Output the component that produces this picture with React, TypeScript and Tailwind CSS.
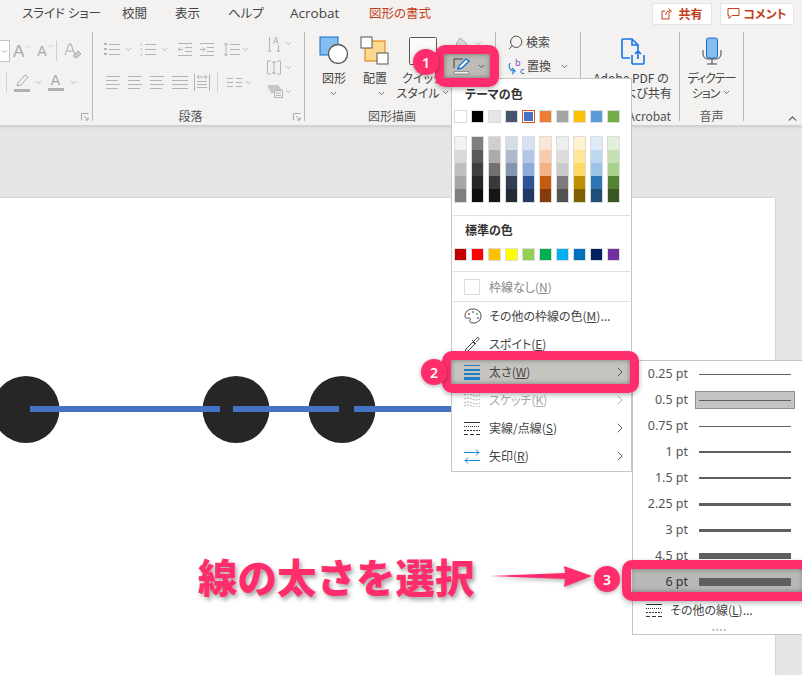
import { ChevronDown, ChevronRight, ChevronUp, Search } from "lucide-react";
import type { ReactNode } from "react";

const jp = "font-['Noto_Sans_CJK_JP','Noto_Sans',sans-serif]";

const themeColors = [
  "bg-[#ffffff]", "bg-[#000000]", "bg-[#e7e6e6]", "bg-[#44546a]", "bg-[#4472c4]",
  "bg-[#ed7d31]", "bg-[#a5a5a5]", "bg-[#ffc000]", "bg-[#5b9bd5]", "bg-[#70ad47]",
];

const standardColors = [
  "bg-[#c00000]", "bg-[#ff0000]", "bg-[#ffc000]", "bg-[#ffff00]", "bg-[#92d050]",
  "bg-[#00b050]", "bg-[#00b0f0]", "bg-[#0070c0]", "bg-[#002060]", "bg-[#7030a0]",
];

const shades = [
  ["bg-[#f2f2f2]", "bg-[#d9d9d9]", "bg-[#bfbfbf]", "bg-[#a6a6a6]", "bg-[#7f7f7f]"],
  ["bg-[#7f7f7f]", "bg-[#595959]", "bg-[#3f3f3f]", "bg-[#262626]", "bg-[#0d0d0d]"],
  ["bg-[#d0cece]", "bg-[#aeabab]", "bg-[#757070]", "bg-[#3a3838]", "bg-[#171616]"],
  ["bg-[#d6dce5]", "bg-[#adb9ca]", "bg-[#8497b0]", "bg-[#333f50]", "bg-[#222a35]"],
  ["bg-[#d9e2f3]", "bg-[#b4c7e7]", "bg-[#8faadc]", "bg-[#2f5597]", "bg-[#1f3864]"],
  ["bg-[#fbe5d6]", "bg-[#f8cbad]", "bg-[#f4b183]", "bg-[#c55a11]", "bg-[#843c0c]"],
  ["bg-[#ededed]", "bg-[#dbdbdb]", "bg-[#c9c9c9]", "bg-[#7b7b7b]", "bg-[#525252]"],
  ["bg-[#fff2cc]", "bg-[#ffe699]", "bg-[#ffd966]", "bg-[#bf9000]", "bg-[#7f6000]"],
  ["bg-[#deebf7]", "bg-[#bdd7ee]", "bg-[#9dc3e6]", "bg-[#2e75b6]", "bg-[#1f4e79]"],
  ["bg-[#e2f0d9]", "bg-[#c5e0b4]", "bg-[#a9d18e]", "bg-[#548235]", "bg-[#385723]"],
];

const weights = [
  { label: "0.25 pt", line: "h-px" },
  { label: "0.5 pt", line: "h-px", selected: true },
  { label: "0.75 pt", line: "h-px" },
  { label: "1 pt", line: "h-[2px]" },
  { label: "1.5 pt", line: "h-[2px]" },
  { label: "2.25 pt", line: "h-[3px]" },
  { label: "3 pt", line: "h-[3px]" },
  { label: "4.5 pt", line: "h-[6px]" },
  { label: "6 pt", line: "h-[8px]" },
];

const Caret = ({ className = "" }: { className?: string }) => (
  <ChevronDown className={`h-[9px] w-[9px] ${className}`} strokeWidth={2} />
);

const Launcher = () => (
  <svg className="absolute right-[3px] top-[81px] h-[8px] w-[8px]" viewBox="0 0 8 8" fill="none" stroke="#a8a8a8">
    <path d="M.5 7.5v-7h7M3 3l4 4M7 4v3H4" />
  </svg>
);

// stacked gray strokes for the disabled paragraph buttons
const Lines = ({ w = 14, gap = 4, n = 4, left = 0 }: { w?: number; gap?: number; n?: number; left?: number }) => (
  <svg width={w + left} height={gap * (n - 1) + 1} stroke="#b4b4b4">
    {Array.from({ length: n }, (_, i) => (
      <path key={i} d={`M${left} ${i * gap + 0.5}h${i % 2 && w < 16 ? w - 2 : w}`} />
    ))}
  </svg>
);

// "太さ(W)" -> the letter in brackets gets its access-key underline
const Mnemonic = ({ label }: { label: string }) => {
  const [before, key, after] = label.split(/\(|\)/);
  return <>{before}(<span className="underline">{key}</span>){after}</>;
};

const Group = ({ w, label, launcher, labelPad = "", children }: { w: string; label?: string; launcher?: boolean; labelPad?: string; children: ReactNode }) => (
  <div className={`relative flex h-[89px] shrink-0 flex-col border-r border-[#b9b9b9] ${w}`}>
    <div className="min-h-0 flex-1">{children}</div>
    <div className={`-mb-[4px] h-[18px] text-center text-[12px] leading-[18px] text-[#555] ${labelPad}`}>{label}</div>
    {launcher && <Launcher />}
  </div>
);

const FontGroup = () => (
  <Group w="w-[93px]" launcher>
    <div className="flex h-[30px] items-center pt-[8px] text-[#a8a8a8]">
      <div className="flex h-[22px] w-[10px] items-center border-y border-r border-[#c4c4c4] bg-white">
        <Caret />
      </div>
      <span className="ml-[3px] font-['Liberation_Sans'] text-[17px] leading-none">A</span>
      <ChevronUp className="h-[7px] w-[7px] -translate-y-[5px]" />
      <span className="ml-[6px] font-['Liberation_Sans'] text-[14px] leading-none">A</span>
      <ChevronDown className="h-[7px] w-[7px] -translate-y-[5px]" />
      <div className="ml-[2px] h-[20px] w-px bg-[#cfcfcf]" />
      <svg className="ml-[7px]" width="18" height="18" viewBox="0 0 18 18" fill="none" stroke="#a8a8a8">
        <path d="M1 13 5 2h2l4 11M3 9h6" />
        <path d="m9 14 5-5 3 3-5 4z" fill="#ccc" />
      </svg>
    </div>
    <div className="mt-[9px] flex h-[22px] items-center text-[#a8a8a8]">
      <div className="ml-[6px] h-[20px] w-px bg-[#cfcfcf]" />
      <svg className="ml-[7px]" width="17" height="20" viewBox="0 0 17 20" fill="none" stroke="#a8a8a8">
        <path d="m4 11 7-8 3 2-7 8-4 1z" />
        <path d="M0 17h16v3H0z" fill="#b0b0b0" stroke="none" />
      </svg>
      <Caret className="ml-[3px]" />
      <div className="ml-[4px] flex w-[17px] flex-col items-center">
        <span className="font-['Liberation_Sans'] text-[14px] leading-[15px] text-[#a8a8a8]">A</span>
        <div className="h-[3px] w-[16px] bg-[#b0b0b0]" />
      </div>
      <Caret className="ml-[5px]" />
    </div>
  </Group>
);

const ParagraphGroup = () => (
  <Group w="w-[212px]" label="段落" labelPad="pr-[16px]" launcher>
    <div className="flex text-[#a8a8a8]">
      <div className="w-[174px]">
        <div className="mt-[9px] flex h-[16px] items-center pl-[11px]">
          <svg width="16" height="15" fill="#b4b4b4" stroke="#b4b4b4">
            <path d="M0 1h3v2H0zM0 6h3v2H0zM0 11h3v2H0z" stroke="none" />
            <path d="M5 2.5h11M5 7.5h11M5 12.5h11" fill="none" />
          </svg>
          <Caret className="ml-[4px]" />
          <svg className="ml-[7px]" width="16" height="15" stroke="#b4b4b4" fill="none">
            <text x="0" y="4" fontSize="4" fill="#aaa" stroke="none">1</text>
            <text x="0" y="9" fontSize="4" fill="#aaa" stroke="none">2</text>
            <text x="0" y="14" fontSize="4" fill="#aaa" stroke="none">3</text>
            <path d="M5 2.5h11M5 7.5h11M5 12.5h11" />
          </svg>
          <Caret className="ml-[4px]" />
          <svg className="ml-[9px]" width="14" height="13" stroke="#b4b4b4" fill="none">
            <path d="M0 .5h14M7 4.5h7M7 8.5h7M0 12.5h14M5 6.5H0m2-2-2 2 2 2" />
          </svg>
          <svg className="ml-[8px]" width="14" height="13" stroke="#b4b4b4" fill="none">
            <path d="M0 .5h14M7 4.5h7M7 8.5h7M0 12.5h14M0 6.5h5m-2-2 2 2-2 2" />
          </svg>
          <svg className="ml-[9px]" width="17" height="15" stroke="#b4b4b4" fill="none">
            <path d="M3 1v13M1 3l2-2 2 2M1 12l2 2 2-2M7 2.5h10M7 7.5h10M7 12.5h10" />
          </svg>
          <Caret className="ml-[1px]" />
        </div>
        <div className="mt-[14px] flex h-[22px] items-center pl-[13px]">
          <Lines />
          <span className="ml-[8px]"><Lines /></span>
          <span className="ml-[8px]"><Lines /></span>
          <span className="ml-[8px]"><Lines w={16} /></span>
          <svg className="ml-[6px]" width="16" height="17" stroke="#b4b4b4" fill="none">
            <path d="M.5 0v17M15.5 0v17M3 7.500h10M3 10.500h10M3 13.500h10M3 3h10M5 1 3 3l2 2M11 1l2 2-2 2" />
          </svg>
          <div className="ml-[7px] h-[20px] w-px bg-[#cfcfcf]" />
          <svg className="ml-[9px]" width="15" height="9" stroke="#b4b4b4" fill="none">
            <path d="M0 .5h6M9 .5h6M0 4.500h6M9 4.500h6M0 8.500h6M9 8.500h6" />
          </svg>
          <Caret className="ml-[2px]" />
        </div>
      </div>
      <div className="flex flex-col">
        <div className="mt-[1px] flex h-[20px] items-center">
          <svg width="14" height="19" fill="none" stroke="#b4b4b4">
            <path d="M2.500 3v15M.5 16l2 2 2-2M11.500 11v7M9.500 16l2 2 2-2" />
            <text x="6" y="10" fontSize="9" fill="#aaa" stroke="none">A</text>
          </svg>
          <Caret className="ml-[3px]" />
        </div>
        <div className="mt-[4px] flex h-[20px] items-center">
          <svg width="14" height="15" fill="none" stroke="#b4b4b4">
            <path d="M4 1H.5v13H4M10 1h3.500v13H10M7 1v13M5 3l2-2 2 2M5 12l2 2 2-2" />
          </svg>
          <Caret className="ml-[3px]" />
        </div>
        <div className="mt-[4px] flex h-[20px] items-center">
          <svg width="16" height="14" fill="none" stroke="#b4b4b4">
            <path d="M0 1h11l4 5H8v3H4z" fill="#c8c8c8" stroke="none" />
            <path d="M7.500 6.500h8v7h-8zM9 9h5M9 11.500h5" fill="#f3f2f1" />
          </svg>
          <Caret className="ml-[1px]" />
        </div>
      </div>
    </div>
  </Group>
);

const BigButton = ({ w, icon, lines }: { w: string; icon: ReactNode; lines: ReactNode }) => (
  <div className={`flex shrink-0 flex-col items-center ${w}`}>
    <div className="flex h-[36px] items-center">{icon}</div>
    <div className="mt-[1px] text-center text-[12px] leading-[15px] text-[#444]">{lines}</div>
  </div>
);

const ShapeGroup = () => (
  <Group w="w-[191px]" label="図形描画" labelPad="pr-[16px]">
    <div className="flex pl-[11px] pt-[1px]">
      <BigButton
        w="w-[36px]"
        icon={
          <svg width="30" height="30" viewBox="0 0 30 30">
            <rect x="1" y="1" width="18" height="18" fill="#84bdee" stroke="#0f6fd0" />
            <circle cx="19" cy="18" r="9.500" fill="#fff" stroke="#555" strokeWidth="1.300" />
          </svg>
        }
        lines={<><div>図形</div><Caret className="mx-auto mt-[4px] text-[#444]" /></>}
      />
      <BigButton
        w="w-[40px]"
        icon={
          <svg className="ml-[6px]" width="30" height="30" viewBox="0 0 30 30">
            <rect x="5" y="5" width="20" height="20" fill="#fbd98e" stroke="#df7a00" />
            <rect x="1" y="1" width="11" height="11" fill="#fff" stroke="#555" />
            <rect x="17" y="17" width="11" height="11" fill="#fff" stroke="#555" />
          </svg>
        }
        lines={<><div className="ml-[6px]">配置</div><Caret className="ml-[20px] mt-[4px] text-[#444]" /></>}
      />
      <BigButton
        w="w-[62px]"
        icon={
          <svg className="ml-[3px]" width="34" height="30" viewBox="0 0 34 30" fill="none">
            <rect x="1.500" y="1.500" width="27" height="27" rx="1" fill="#fafafa" stroke="#555" />
            <path d="m26 20 7-9" stroke="#777" strokeWidth="2" />
          </svg>
        }
        lines={<><div>クイック</div><div className="flex items-center justify-center">スタイル<Caret className="ml-[1px]" /></div></>}
      />
      <div className="flex h-[20px] items-center pt-[1px]">
        <svg width="17" height="14" viewBox="0 0 17 14" fill="#bbb" stroke="#a8a8a8">
          <path d="m6 1 7 6-5 6-6-6z" fill="#d8d8d8" />
          <path d="M14 8c1 2 2 3 1 4s-2 0-1-4z" />
        </svg>
        <Caret className="ml-[3px] text-[#a8a8a8]" />
      </div>
    </div>
  </Group>
);

const EditGroup = () => (
  <Group w="w-[85px]">
    <div className="pl-[11px] text-[12px] leading-[16px] text-[#444]">
      <div className="flex h-[20px] items-center">
        <Search className="h-[17px] w-[17px] -scale-x-100 text-[#444]" strokeWidth={1.300} />
        <span className="ml-[2px]">検索</span>
      </div>
      <div className="mt-[4px] flex h-[20px] items-center">
        <svg width="19" height="20" viewBox="0 0 19 20" fill="none">
          <path d="M3 7c-2 4 0 8 4 8" stroke="#2b88d8" strokeWidth="1.300" />
          <path d="m5 12 3 3-3 3" stroke="#2b88d8" strokeWidth="1.300" />
          <text x="8" y="10" fontSize="9" fill="#8a4bb0">b</text>
          <text x="13" y="18" fontSize="9" fill="#2b6fb0">c</text>
        </svg>
        <span className="ml-[1px]">置換</span>
        <Caret className="ml-[9px]" />
      </div>
    </div>
  </Group>
);

const AdobeGroup = () => (
  <Group w="w-[99px]" label="Adobe Acrobat">
    <div className="flex flex-col items-center pl-[2px] pt-[1px]">
      <div className="flex h-[36px] items-center">
        <svg className="ml-[4px]" width="24" height="27" viewBox="0 0 24 27" fill="none" stroke="#1473e6" strokeWidth="1.600">
          <path d="M9 20H2a1 1 0 0 1-1-1V2a1 1 0 0 1 1-1h9l6 6v5M11 1v6h6" />
          <path d="M11 17v8a1 1 0 0 0 1 1h10a1 1 0 0 0 1-1v-8M17 21v-8m-3 3 3-3 3 3" />
        </svg>
      </div>
      <div className="mt-[1px] whitespace-nowrap text-center text-[12px] leading-[15px] text-[#444]">
        <div>Adobe PDF の</div>
        <div>作成および共有</div>
      </div>
    </div>
  </Group>
);

const VoiceGroup = () => (
  <Group w="w-[64px]" label="音声">
    <div className="flex flex-col items-center pt-[1px]">
      <div className="flex h-[36px] items-center">
        <svg width="20" height="28" viewBox="0 0 20 28" fill="none">
          <rect x="4.500" y="1" width="11" height="20" rx="2" fill="#84bdee" stroke="#0f6fd0" />
          <path d="M1 13v4a5 5 0 0 0 5 5h8a5 5 0 0 0 5-5v-4M10 22v5M5 27h10" stroke="#444" />
        </svg>
      </div>
      <div className="mt-[1px] whitespace-nowrap text-center text-[12px] leading-[15px] tracking-[-1px] text-[#444]">
        <div>ディクテー</div>
        <div className="flex items-center justify-center">ション<Caret className="ml-[3px]" /></div>
      </div>
    </div>
  </Group>
);

const Ribbon = () => (
  <div className="relative z-10 h-[98px] shrink-0 bg-[#f3f2f1] pt-[5px] shadow-[0_2px_3px_rgba(0,0,0,0.12)]">
    <div className="flex">
      <FontGroup />
      <ParagraphGroup />
      <ShapeGroup />
      <EditGroup />
      <AdobeGroup />
      <VoiceGroup />
      <div className="flex flex-1 items-end justify-end pb-[5px] pr-[3px]">
        <ChevronUp className="h-[13px] w-[13px] translate-y-[9px] text-[#555]" />
      </div>
    </div>
  </div>
);

const TabBar = () => (
  <div className="flex h-[27px] shrink-0 items-center bg-[#f3f2f1] text-[12.500px] text-[#444]">
    <span className="ml-[22px] w-[100px]">スライド ショー</span>
    <span className="w-[53px]">校閲</span>
    <span className="w-[53px]">表示</span>
    <span className="w-[62px]">ヘルプ</span>
    <span className="w-[79px] font-['Open_Sans','Noto_Sans'] text-[13.500px]">Acrobat</span>
    <span className="w-[283px] text-[#c43e1c]">図形の書式</span>
    <div className="flex h-[22px] w-[60px] items-center justify-center gap-[5px] rounded-[2px] border border-[#e4e2e0] bg-white text-[12px] font-bold text-[#c43e1c]">
      <svg width="12" height="13" viewBox="0 0 12 13" fill="none" stroke="#c43e1c">
        <path d="M8 6.500v5.500H1V4h3M5 8c0-3 1-4 4-4M7.500 1.500 10.500 4 7.500 6.500" />
      </svg>
      共有
    </div>
    <div className="ml-[8px] flex h-[22px] w-[74px] items-center justify-center gap-[3px] rounded-[2px] border border-[#e4e2e0] bg-white text-[12px] font-bold text-[#c43e1c]">
      <svg width="13" height="13" viewBox="0 0 13 13" fill="none" stroke="#c43e1c">
        <path d="M1 1.500h11v7H5l-3 3v-3H1z" />
      </svg>
      コメント
    </div>
  </div>
);

const Swatch = ({ color, active }: { color: string; active?: boolean }) => (
  <div className={`h-[13px] w-[13px] border ${active ? "border-[#e8501a] p-px" : "border-[#dcdcdc]"}`}>
    <div className={`h-full w-full ${color}`} />
  </div>
);

const MenuItem = ({ icon, label, hasArrow, muted, hot }: { icon: ReactNode; label: string; hasArrow?: boolean; muted?: boolean; hot?: boolean }) => (
  <div className={`flex h-[28px] items-center pl-[12px] text-[12px] ${hot ? "bg-[#c6c4bf]" : ""} ${muted ? "text-[#aaa]" : "text-[#444]"}`}>
    <div className="flex w-[25px] shrink-0 items-center">{icon}</div>
    <span className="flex-1 whitespace-nowrap"><Mnemonic label={label} /></span>
    {hasArrow && <ChevronRight className={`mr-[3px] h-[16px] w-[16px] ${muted ? "text-[#aaa]" : "text-[#444]"}`} strokeWidth={1.300} />}
  </div>
);

const NoLineItem = () => (
  <div className="flex h-[29px] items-center pl-[12px] text-[12px] text-[#888]">
    <div className="mr-[9px] h-[16px] w-[16px] border border-[#dcdcdc]" />
    <Mnemonic label="枠線なし(N)" />
  </div>
);

const ColorMenu = () => (
  <div className="absolute left-[451px] top-[78px] z-20 h-[394px] w-[181px] border border-[#c8c6c4] bg-white">
    <div className="h-[29px] pl-[13px] text-[12px] font-bold leading-[29px] text-[#333]">テーマの色</div>
    <div className="mt-[2px] flex gap-[4px] pl-[2px]">
      {themeColors.map((c, i) => <Swatch key={c} color={c} active={i === 4} />)}
    </div>
    <div className="mt-[13px] flex gap-[4px] pl-[2px]">
      {shades.map((col, i) => (
        <div key={i} className="w-[13px] border border-[#dcdcdc]">
          {col.map(c => <div key={c} className={`h-[13px] ${c}`} />)}
        </div>
      ))}
    </div>
    <div className="mx-px mt-[12px] h-px bg-[#e1dfdd]" />
    <div className="h-[30px] pl-[13px] text-[12px] font-bold leading-[28px] text-[#333]">標準の色</div>
    <div className="mt-[2px] flex gap-[4px] pl-[2px]">
      {standardColors.map(c => <Swatch key={c} color={c} />)}
    </div>
    <div className="mx-px mt-[10px] h-px bg-[#e1dfdd]" />
    <NoLineItem />
    <div className="mx-px h-px bg-[#e1dfdd]" />
    <MenuItem
      label="その他の枠線の色(M)..."
      icon={
        <svg width="18" height="16" viewBox="0 0 18 16" fill="none" stroke="#444">
          <path d="M9 1C4 1 1 4 1 8c0 3 3 2 4 2s2 1 1 2 0 3 3 3c5 0 8-3 8-7s-3-7-8-7z" />
          <circle cx="5" cy="6" r="1" fill="#c43e1c" stroke="none" />
          <circle cx="9" cy="4" r="1" fill="#2b88d8" stroke="none" />
          <circle cx="13" cy="6" r="1" fill="#70ad47" stroke="none" />
          <circle cx="14" cy="10" r="1" fill="#8a4bb0" stroke="none" />
        </svg>
      }
    />
    <MenuItem
      label="スポイト(E)"
      icon={
        <svg width="16" height="17" viewBox="0 0 16 17" fill="none" stroke="#444">
          <path d="m1 16 1-3 7-7 2 2-7 7zM8 4l4 4M10 5l3-3c1-1 2 0 2 1s-3 3-3 3" />
        </svg>
      }
    />
    <MenuItem
      hot
      hasArrow
      label="太さ(W)"
      icon={
        <svg width="16" height="15" fill="#1f80c8">
          <path d="M0 0h16v1H0zM0 4h16v2H0zM0 8h16v2H0zM0 12h16v3H0z" />
        </svg>
      }
    />
    <MenuItem
      muted
      hasArrow
      label="スケッチ(K)"
      icon={
        <svg width="16" height="13" fill="none" stroke="#aaa" strokeDasharray="2 1">
          <path d="M0 1q4-2 8 0t8 0M0 5q4-2 8 0t8 0M0 9q4-2 8 0t8 0M0 12q4-2 8 0t8 0" />
        </svg>
      }
    />
    <MenuItem
      hasArrow
      label="実線/点線(S)"
      icon={
        <svg width="16" height="13" fill="none" stroke="#333">
          <path d="M0 .5h16" />
          <path d="M0 4.500h16" strokeDasharray="1 1" />
          <path d="M0 8.500h16" strokeDasharray="2 1" />
          <path d="M0 12.500h16" strokeDasharray="4 2" />
        </svg>
      }
    />
    <MenuItem
      hasArrow
      label="矢印(R)"
      icon={
        <svg width="16" height="15" fill="none" stroke="#1f80c8">
          <path d="M0 3.500h15m-3-3 3 3-3 3M16 11.500H1m3-3-3 3 3 3" />
        </svg>
      }
    />
  </div>
);

const WeightMenu = () => (
  <div className="absolute left-[632px] top-[360px] z-20 h-[275px] w-[175px] border border-[#c8c6c4] bg-white">
    {weights.map(w => (
      <div key={w.label} className={`flex h-[26px] items-center font-['Noto_Sans'] text-[12.500px] ${w.label === "6 pt" ? "bg-[#b8b8b6] text-[#333]" : "text-[#555]"}`}>
        <span className="w-[55px] text-right">{w.label}</span>
        <div className={`ml-[7px] flex h-[18px] w-[100px] items-center border px-[3px] ${w.selected ? "border-[#8e8e8e] bg-[#c4c4c4]" : "border-transparent"}`}>
          <div className={`w-full bg-[#5f5f5f] ${w.line}`} />
        </div>
      </div>
    ))}
    <div className="flex h-[30px] items-center pl-[13px] text-[12px] text-[#444]">
      <svg className="mr-[8px]" width="16" height="13" fill="none" stroke="#333">
        <path d="M0 .5h16" />
        <path d="M0 4.500h16" strokeDasharray="1 1" />
        <path d="M0 8.500h16" strokeDasharray="2 1" />
        <path d="M0 12.500h16" strokeDasharray="4 2" />
      </svg>
      <Mnemonic label="その他の線(L)..." />
    </div>
    <div className="text-center text-[8px] leading-[8px] tracking-[1px] text-[#bbb]">••••</div>
  </div>
);

const Badge = ({ n, className }: { n: number; className: string }) => (
  <div className={`absolute z-40 flex h-[26px] w-[26px] items-center justify-center rounded-full bg-[#ff2d6c] font-['Noto_Sans'] text-[14px] font-semibold text-white shadow-[0_1px_4px_rgba(0,0,0,0.35)] ${className}`}>
    {n}
  </div>
);

const Frame = ({ className }: { className: string }) => (
  <div className={`absolute z-30 rounded-[10px] border-[9px] border-[#ff2d6c] shadow-[0_2px_5px_rgba(0,0,0,0.3),inset_0_0_5px_rgba(0,0,0,0.4)] ${className}`} />
);

const Slide = () => (
  <div className="relative h-[477px] w-[775px] bg-white shadow-[0_0_2px_rgba(0,0,0,0.2)]">
    {[26, 236, 342].map(x => (
      <div key={x} className="absolute top-[178px] h-[67px] w-[67px] -translate-x-1/2 rounded-full bg-[#262626]" style={{ left: x }} />
    ))}
    <div className="absolute left-[30px] top-[208px] h-[6px] w-[190px] bg-[#4472c4]" />
    <div className="absolute left-[233px] top-[208px] h-[6px] w-[106px] bg-[#4472c4]" />
    <div className="absolute left-[354px] top-[208px] h-[6px] w-[100px] bg-[#4472c4]" />
  </div>
);

const Callouts = () => (
  <>
    <Frame className="left-[435px] top-[45px] h-[42px] w-[64px]" />
    <Frame className="left-[442px] top-[351px] h-[42px] w-[197px]" />
    <Frame className="left-[622px] top-[560px] h-[41px] w-[190px]" />
    <Badge n={1} className="left-[413px] top-[49px]" />
    <Badge n={2} className="left-[421px] top-[359px]" />
    <Badge n={3} className="left-[594px] top-[566px]" />
    <div className="absolute left-[198px] top-[547px] z-30 whitespace-nowrap text-[39.500px] font-black leading-[58px] text-[#ff2d6c] [font-feature-settings:normal] [paint-order:stroke_fill] [-webkit-text-stroke:3px_white] [text-shadow:2px_3px_4px_rgba(0,0,0,0.35)]">
      線の太さを選択
    </div>
    <svg className="absolute left-[488px] top-[564px] z-30 drop-shadow-[1px_2px_2px_rgba(0,0,0,0.3)]" width="108" height="26" viewBox="0 0 108 26">
      <path d="M2 12 77 9l-1-7 28 10-28 11 1-8z" fill="#ff2d6c" />
    </svg>
  </>
);

const App = () => {
  return (
    <div className={`relative flex h-[675px] w-[802px] flex-col overflow-hidden bg-[#e6e6e6] [font-feature-settings:'palt'] ${jp}`}>
      <TabBar />
      <Ribbon />
      <div className="flex-1 pt-[73px]">
        <Slide />
      </div>
      <ColorMenu />
      <WeightMenu />
      {/* pen button sits on top of the ribbon, inside callout 1 */}
      <div className="absolute left-[444px] top-[54px] z-20 flex h-[24px] w-[46px] items-center bg-[#bdbbb5] pl-[9px]">
        <svg width="18" height="17" viewBox="0 0 18 17" fill="none">
          <path d="M1 1h9M1 1v9" stroke="#444" />
          <path d="m5 11 1-3 7-7 3 2-7 7z" fill="#fff" stroke="#0f6fd0" strokeWidth="1.300" />
          <path d="M1 13.500h15v2.500H1z" fill="#f2f2f2" stroke="#777" strokeWidth="0.700" />
        </svg>
        <Caret className="ml-[6px] text-[#333]" />
      </div>
      <Callouts />
    </div>
  );
};

export default App;
